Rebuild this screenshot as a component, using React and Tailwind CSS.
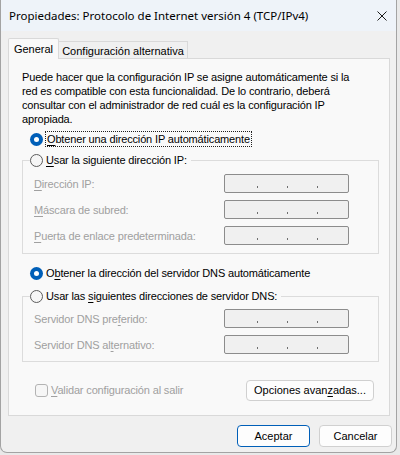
import React from "react";

function U({ children }) {
  return <span className="underline decoration-[1px] underline-offset-[2px]">{children}</span>;
}

function Radio({ checked }) {
  if (checked) {
    return (
      <span className="w-[13px] h-[13px] rounded-full bg-[#005fb8] flex items-center justify-center shrink-0">
        <span className="w-[5px] h-[5px] rounded-full bg-white" />
      </span>
    );
  }
  return <span className="w-[13px] h-[13px] rounded-full border border-[#5c5c5c] bg-[#f6f6f6] shrink-0 box-border" />;
}

function IpBox() {
  return (
    <div className="w-[125px] h-[19px] shrink-0 box-border border border-[#8c8c8c] rounded-[2px] bg-[#f0f0f0] flex items-end pb-[4px] pl-[32px] gap-[29px]">
      <span className="w-[1px] h-[2px] bg-[#6e6e6e]" />
      <span className="w-[1px] h-[2px] bg-[#6e6e6e]" />
      <span className="w-[1px] h-[2px] bg-[#6e6e6e]" />
    </div>
  );
}

function FieldRow({ children }) {
  return (
    <div className="flex items-center justify-between h-[19px] pl-[11px] pr-[29px]">
      <span className="text-[#a0a0a0] whitespace-nowrap">{children}</span>
      <IpBox />
    </div>
  );
}

function Group({ legend, mt, pb, children }) {
  return (
    <fieldset className={`ml-[13px] w-[357px] border border-[#dcdcdc] box-border ${mt} ${pb}`}>
      <legend className="ml-[7px] pr-[4px] h-[16px]">
        <span className="flex items-center gap-[3px] h-[16px]">
          <Radio checked={false} />
          <span className="whitespace-nowrap">{legend}</span>
        </span>
      </legend>
      {children}
    </fieldset>
  );
}

export default function App() {
  return (
    <div className="w-[400px] h-[455px] bg-[#e9e9e9] font-['Liberation_Sans',Arial,sans-serif] text-[11px] tracking-[-0.15px] text-black leading-[16px]">
      <div className="w-[397px] h-[453px] box-border flex flex-col bg-[#f0f0f0] border-x border-b border-[#a3a3a3] rounded-b-[7px] overflow-hidden">
        {/* Title bar */}
        <div className="h-[31px] shrink-0 bg-[#eef3f9] flex items-center justify-between pl-[8px] pr-[8px]">
          <span className="whitespace-nowrap font-['Noto_Sans',sans-serif] text-[11.5px] tracking-normal">
            Propiedades: Protocolo de Internet versión 4 (TCP/IPv4)
          </span>
          <svg width="10" height="10" viewBox="0 0 10 10" className="mr-[1px]">
            <path d="M0.5 0.5 L9.5 9.5 M9.5 0.5 L0.5 9.5" stroke="#1a1a1a" strokeWidth="1" fill="none" />
          </svg>
        </div>

        {/* Tabs */}
        <div className="mt-[7px] ml-[7px] flex items-end h-[20px] tracking-normal">
          <div className="relative z-10 -mb-[1px] h-[21px] w-[51px] box-border bg-[#f9f9f9] border-t border-l border-r border-[#d9d9d9] rounded-t-[2px] flex items-center justify-center pb-[1px] whitespace-nowrap">
            General
          </div>
          <div className="h-[17px] w-[129px] box-border bg-[#f0f0f0] border-t border-r border-[#d9d9d9] flex items-center justify-center pt-[1px] whitespace-nowrap">
            Configuración alternativa
          </div>
        </div>

        {/* Panel */}
        <div className="ml-[7px] w-[382px] h-[358px] box-border bg-[#f9f9f9] border border-[#d9d9d9] flex flex-col">
          <p className="mt-[11px] ml-[13px] leading-[14px] whitespace-nowrap">
            Puede hacer que la configuración IP se asigne automáticamente si la
            <br />
            red es compatible con esta funcionalidad. De lo contrario, deberá
            <br />
            consultar con el administrador de red cuál es la configuración IP
            <br />
            apropiada.
          </p>

          <div className="mt-[5px] ml-[21px] flex items-center h-[16px] gap-[2px]">
            <Radio checked />
            <span className="border border-dotted border-[#202020] px-[1px] leading-[14px] whitespace-nowrap">
              <U>O</U>btener una dirección IP automáticamente
            </span>
          </div>

          <Group
            mt="mt-[5px]"
            pb="pb-[8px]"
            legend={
              <>
                <U>U</U>sar la siguiente dirección IP:
              </>
            }
          >
            <div className="mt-[6px] flex flex-col gap-[7px]">
              <FieldRow>
                <U>D</U>irección IP:
              </FieldRow>
              <FieldRow>
                <U>M</U>áscara de subred:
              </FieldRow>
              <FieldRow>
                <U>P</U>uerta de enlace predeterminada:
              </FieldRow>
            </div>
          </Group>

          <div className="mt-[11px] ml-[21px] flex items-center h-[16px] gap-[3px]">
            <Radio checked />
            <span className="whitespace-nowrap">
              O<U>b</U>tener la dirección del servidor DNS automáticamente
            </span>
          </div>

          <Group
            mt="mt-[7px]"
            pb="pb-[7px]"
            legend={
              <>
                Usar las <U>s</U>iguientes direcciones de servidor DNS:
              </>
            }
          >
            <div className="mt-[5px] flex flex-col gap-[7px]">
              <FieldRow>
                Servidor DNS pre<U>f</U>erido:
              </FieldRow>
              <FieldRow>
                Servidor DNS al<U>t</U>ernativo:
              </FieldRow>
            </div>
          </Group>

          <div className="mt-[17px] flex items-center justify-between h-[22px] pl-[26px] pr-[15px]">
            <div className="flex items-center gap-[3px] text-[#a0a0a0]">
              <span className="w-[13px] h-[13px] box-border border border-[#b3b3b3] rounded-[3px] bg-[#f6f6f6]" />
              <span className="whitespace-nowrap">
                <U>V</U>alidar configuración al salir
              </span>
            </div>
            <button className="w-[128px] h-[21px] box-border border border-[#d0d0d0] rounded-[4px] bg-[#fdfdfd] flex items-center justify-center whitespace-nowrap tracking-normal">
              Opciones avan<U>z</U>adas...
            </button>
          </div>
        </div>

        {/* Bottom buttons */}
        <div className="mt-[9px] flex justify-end gap-[9px] pr-[4px] tracking-normal">
          <button className="w-[73px] h-[22px] box-border border border-[#005fb8] rounded-[4px] bg-[#fdfdfd] flex items-center justify-center">
            Aceptar
          </button>
          <button className="w-[73px] h-[22px] box-border border border-[#d0d0d0] rounded-[4px] bg-[#fdfdfd] flex items-center justify-center">
            Cancelar
          </button>
        </div>
      </div>
    </div>
  );
}
